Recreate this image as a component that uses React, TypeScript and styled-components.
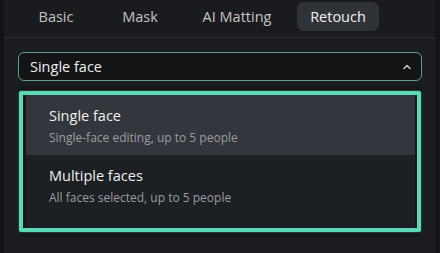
import React from "react";
import styled, { createGlobalStyle } from "styled-components";

const Global = createGlobalStyle`
  html, body { margin: 0; padding: 0; background: #1b1d20; }
  body { font-family: "Open Sans", "Noto Sans", sans-serif; }
  * { box-sizing: border-box; }
`;

const Frame = styled.div`
  width: 440px;
  height: 253px;
  display: flex;
  background: #1b1d20;
  overflow: hidden;
`;

const LeftEdge = styled.div`
  width: 4px;
  background: #121315;
  flex-shrink: 0;
`;

const RightEdge = styled.div`
  width: 5px;
  background: #141518;
  flex-shrink: 0;
`;

const Main = styled.div`
  flex: 1;
  display: flex;
  flex-direction: column;
`;

const Tabs = styled.div`
  height: 38px;
  display: flex;
  align-items: flex-start;
  padding: 2px 0 0 19px;
  border-bottom: 1px solid #2a2c30;
  background: #191b1e;
`;

const Tab = styled.div<{ $active?: boolean; $w: number; $ml?: number }>`
  width: ${(p) => p.$w}px;
  margin-left: ${(p) => p.$ml ?? 0}px;
  height: 29px;
  display: flex;
  align-items: center;
  justify-content: center;
  font-size: 14.5px;
  color: ${(p) => (p.$active ? "#f2f2f2" : "#c4c4c4")};
  background: ${(p) => (p.$active ? "#2f3237" : "transparent")};
  border-radius: 7px;
`;

const Body = styled.div`
  flex: 1;
  padding: 14px 13px 0 14px;
  display: flex;
  flex-direction: column;
`;

const Select = styled.div`
  height: 29px;
  border: 1.5px solid #5a9f8f;
  border-radius: 6px;
  background: #121416;
  display: flex;
  align-items: center;
  justify-content: space-between;
  padding: 0 9px 0 11px;
  color: #efefef;
  font-size: 14.5px;
`;

const Chevron = styled.svg`
  width: 10px;
  height: 10px;
`;

const Panel = styled.div`
  margin-top: 4px;
  background: #16181b;
  border-radius: 6px;
  padding: 6px 1px 0 1px;
  height: 152px;
`;

const Highlight = styled.div`
  border: 4px solid #5dd8b6;
  border-radius: 2px;
  padding: 0 2px 0 3px;
  height: 141px;
  box-shadow: 0 0 0 1px #1d3a33;
  background: #15171a;
  display: flex;
  flex-direction: column;
`;

const Item = styled.div<{ $active?: boolean; $h: number }>`
  height: ${(p) => p.$h}px;
  background: ${(p) => (p.$active ? "#33363c" : "#1c1f23")};
  padding: 11px 0 0 23px;
  display: flex;
  flex-direction: column;
  gap: 2px;
`;

const Title = styled.div`
  font-size: 14.5px;
  color: #f0f0f0;
  line-height: 20px;
`;

const Sub = styled.div`
  font-size: 12px;
  color: #9b9da1;
  line-height: 20px;
`;

export default function App() {
  return (
    <Frame>
      <Global />
      <LeftEdge />
      <Main>
        <Tabs>
          <Tab $w={66}>Basic</Tab>
          <Tab $w={102}>Mask</Tab>
          <Tab $w={92}>AI Matting</Tab>
          <Tab $w={82} $ml={14} $active>
            Retouch
          </Tab>
        </Tabs>
        <Body>
          <Select>
            <span>Single face</span>
            <Chevron viewBox="0 0 10 10">
              <path d="M2 6.5 L5 3.5 L8 6.5" stroke="#c8c8c8" strokeWidth="1.5" fill="none" strokeLinecap="round" strokeLinejoin="round" />
            </Chevron>
          </Select>
          <Panel>
            <Highlight>
              <Item $active $h={60}>
                <Title>Single face</Title>
                <Sub>Single-face editing, up to 5 people</Sub>
              </Item>
              <Item $h={73}>
                <Title>Multiple faces</Title>
                <Sub>All faces selected, up to 5 people</Sub>
              </Item>
            </Highlight>
          </Panel>
        </Body>
      </Main>
      <RightEdge />
    </Frame>
  );
}
